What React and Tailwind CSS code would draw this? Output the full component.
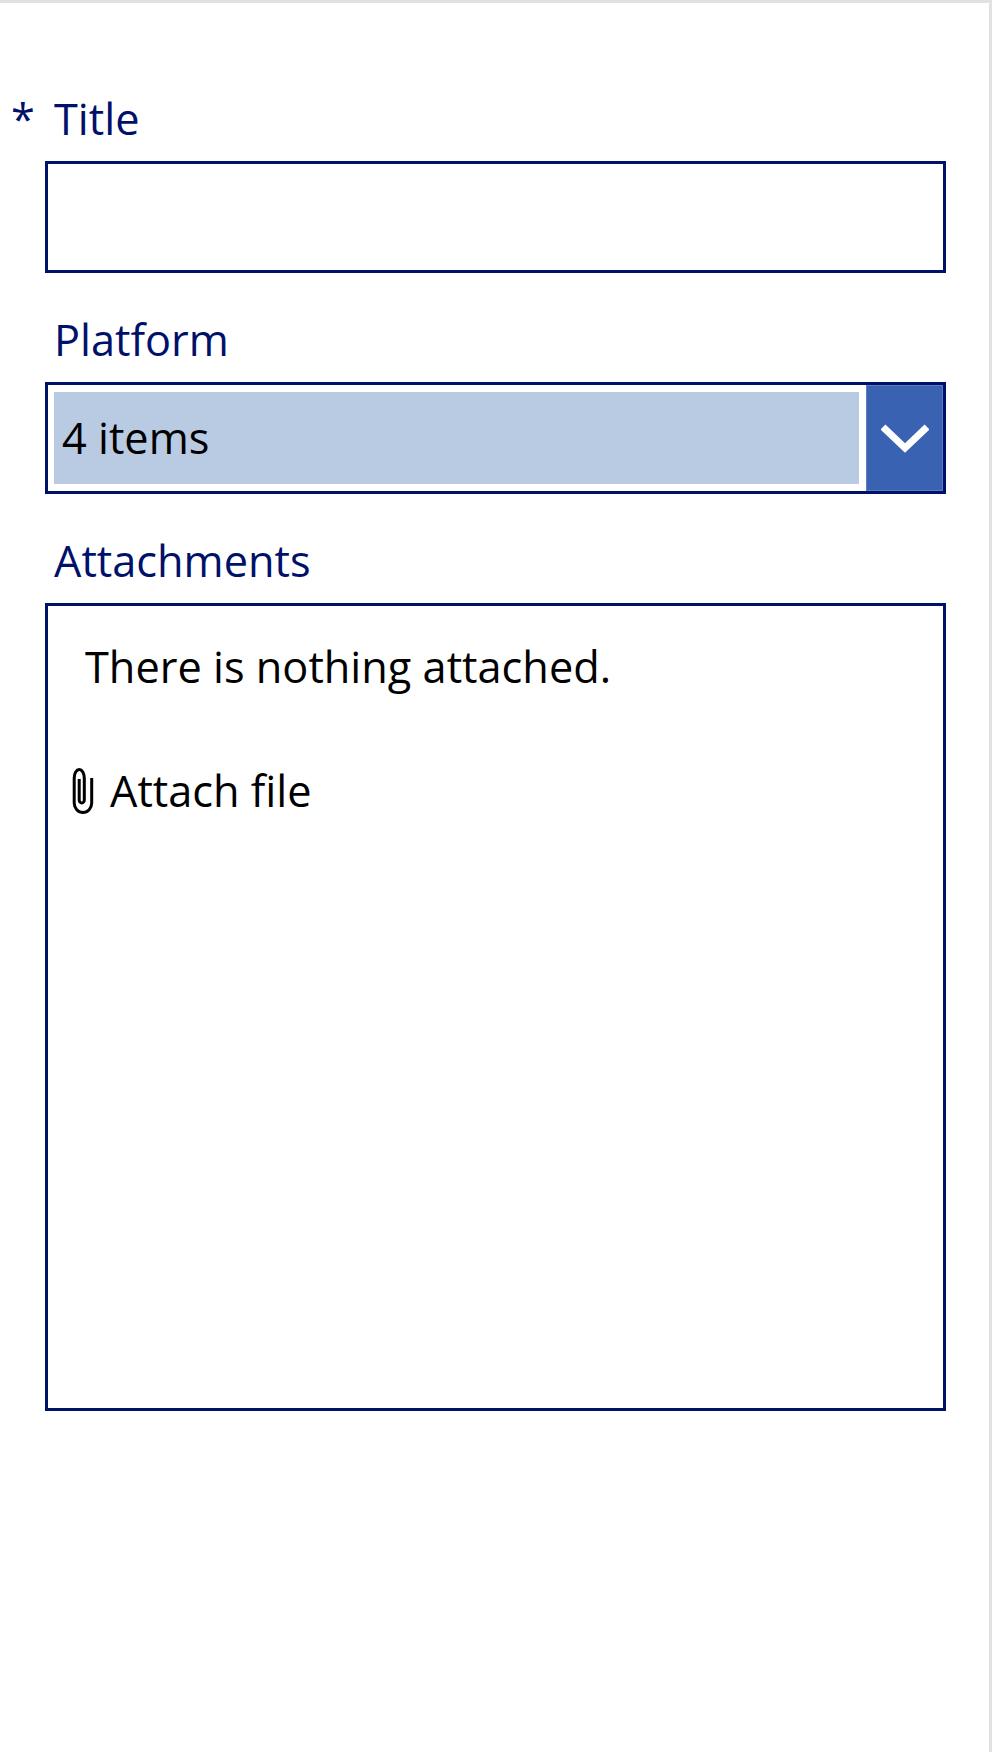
export default function App() {
  const label = "block h-[53px] pl-[9px] text-[43.3px] leading-[53px] text-[#00116a]";
  return (
    <div className="h-[1752px] w-[992px] border-t-[3px] border-r-[3px] border-[#e1e1e1] bg-white font-['Open_Sans',sans-serif]">
      <form className="flex flex-col pl-[45px] pr-[43px] pt-[89px]">
        <div className="relative">
          <span className="absolute -left-[34px] top-0 text-[43.3px] leading-[53px] text-[#00116a]">*</span>
          <label className={label}>Title</label>
        </div>
        <div className="mt-[16px] h-[112px] border-[3px] border-[#00116a]" />
        <label className={`${label} mt-[40px]`}>Platform</label>
        <div className="mt-[16px] flex h-[112px] border-[3px] border-[#00116a]">
          <div className="flex flex-1 items-stretch py-[7px] pl-[6px] pr-[7px]">
            <div className="flex flex-1 items-center bg-[#b9cae3] pl-[8px] text-[43.3px] leading-none text-black">4 items</div>
          </div>
          <div className="flex w-[77px] items-center justify-center border border-[#5b7cc0] bg-[#3a62b3]">
            <svg width="48" height="30" viewBox="0 0 48 30" fill="none" stroke="white" strokeWidth="7">
              <path d="M2 4 L24 25 L46 4" />
            </svg>
          </div>
        </div>
        <label className={`${label} mt-[40px]`}>Attachments</label>
        <div className="mt-[16px] h-[808px] border-[3px] border-[#00116a]">
          <p className="pl-[37px] pt-[32px] text-[43.3px] leading-[57px] text-black">There is nothing attached.</p>
          <div className="mt-[67px] flex items-center pl-[22px] text-[43.3px] leading-[57px] text-black">
            <svg width="24" height="50" viewBox="0 0 24 50" fill="none" stroke="black" strokeWidth="3">
              <path d="M21.7 12 V37 A8.75 9.5 0 0 1 4.2 37 V12 A5.05 8.5 0 0 1 14.3 12 V34 A2.55 3 0 0 1 9.2 34 V13" />
            </svg>
            <span className="ml-[16px]">Attach file</span>
          </div>
        </div>
      </form>
    </div>
  );
}
